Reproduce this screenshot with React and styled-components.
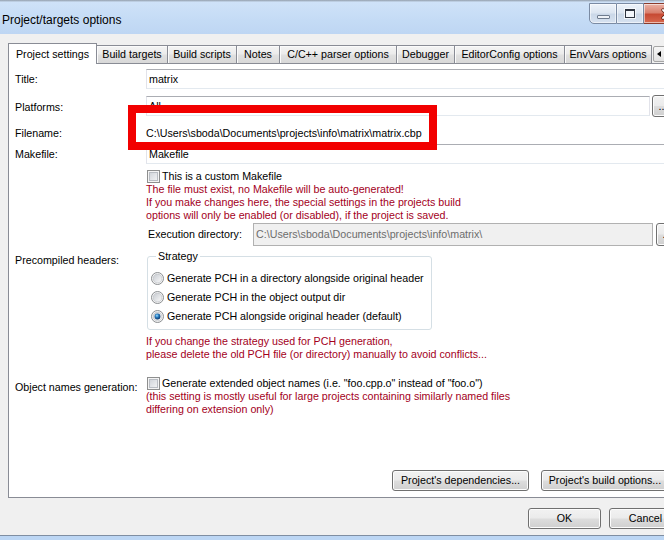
import React from 'react';
import styled, { createGlobalStyle } from 'styled-components';

const Global = createGlobalStyle`
  html, body { margin: 0; padding: 0; background: #ffffff; }
  body {
    font-family: "Liberation Sans", Arial, sans-serif;
    font-size: 10.7px;
    line-height: 13px;
    color: #000;
  }
  #root { width: 670px; height: 540px; overflow: hidden; }
`;

const Viewport = styled.div`
  position: relative;
  width: 664px;
  height: 540px;
  overflow: hidden;
`;

const Window = styled.div`
  width: 720px;
  height: 540px;
  display: flex;
  flex-direction: column;
  background: #f0f0f0;
`;

const TitleBar = styled.div`
  flex: none;
  height: 34px;
  display: flex;
  align-items: flex-start;
  background: linear-gradient(#98a3b0 0, #a9b8c9 1px, #cfe2f8 2px, #c4dbf5 60%, #bed6f3 100%);
`;

const TitleText = styled.div`
  flex: 1;
  padding: 13px 0 0 2px;
  font-size: 12px;
  line-height: 14px;
  color: #000;
`;

const Controls = styled.div`
  display: flex;
  margin: 3px 29px 0 0;
`;

const CaptionButton = styled.div`
  box-sizing: border-box;
  width: ${p => p.$w}px;
  height: 21px;
  display: flex;
  align-items: center;
  justify-content: center;
  border: 1px solid ${p => (p.$close ? '#8a3b2c' : '#7b8ba3')};
  border-left: ${p => (p.$first ? undefined : 'none')};
  border-radius: ${p => (p.$first ? '0 0 0 5px' : p.$close ? '0 0 5px 0' : '0')};
  background: ${p =>
    p.$close
      ? 'linear-gradient(#eab1a4 0%, #d9806e 45%, #c74a34 55%, #d8694f 100%)'
      : 'linear-gradient(#eef3fa 0%, #dde6f1 45%, #cbd8e8 55%, #d7e2f0 100%)'};
  box-shadow: inset 0 0 0 1px rgba(255, 255, 255, 0.55);
`;

const MinGlyph = styled.div`
  width: 11px;
  height: 2px;
  margin-top: 7px;
  border: 1px solid #6f7c8e;
  border-radius: 1px;
  background: #eef2f7;
`;

const MaxGlyph = styled.div`
  box-sizing: border-box;
  width: 10px;
  height: 9px;
  border: 1px solid #2f3540;
  border-top-width: 2px;
  background: #f4f7fb;
  box-shadow: 0 0 0 1px rgba(255, 255, 255, 0.7);
`;

const Body = styled.div`
  flex: 1;
  display: flex;
  flex-direction: column;
  padding-left: 8px;
`;

const TabStrip = styled.div`
  position: relative;
  z-index: 2;
  flex: none;
  height: 29px;
  display: flex;
  align-items: flex-end;
`;

const Tab = styled.div`
  box-sizing: border-box;
  width: ${p => p.$w}px;
  height: ${p => (p.$active ? 21 : 18)}px;
  margin-bottom: ${p => (p.$active ? -1 : 0)}px;
  border-top: 1px solid #898c95;
  border-right: 1px solid #898c95;
  border-left: ${p => (p.$active ? '1px solid #898c95' : 'none')};
  background: ${p =>
    p.$active ? '#ffffff' : 'linear-gradient(#f4f4f4 0%, #ececec 45%, #e0e0e0 55%, #d8d8d8 100%)'};
  box-shadow: ${p => (p.$active ? 'none' : 'inset 1px 1px 0 #fbfbfb')};
  text-align: center;
  padding-top: ${p => (p.$active ? 3 : 0)}px;
  line-height: ${p => (p.$active ? 14 : 17)}px;
  white-space: nowrap;
`;

const Spin = styled.div`
  display: flex;
  margin: 0 0 1px 1px;
`;

const SpinButton = styled.div`
  box-sizing: border-box;
  width: 16px;
  height: 16px;
  display: flex;
  align-items: center;
  padding-left: 3px;
  border: 1px solid #a5a5a5;
  border-radius: 2px;
  background: linear-gradient(#f6f6f6, #e2e2e2);
`;

const LeftTri = styled.div`
  width: 0;
  height: 0;
  border-top: 3.5px solid transparent;
  border-bottom: 3.5px solid transparent;
  border-right: 4px solid #000;
`;

const Panel = styled.div`
  position: relative;
  z-index: 1;
  flex: none;
  box-sizing: border-box;
  height: 435px;
  border: 1px solid #898c95;
  background: #ffffff;
  display: flex;
  flex-direction: column;
  padding: 0 0 6px 6px;
`;

const Row = styled.div`
  display: flex;
  align-items: flex-start;
  margin-top: ${p => p.$mt || 0}px;
`;

const Label = styled.div`
  flex: none;
  width: 131px;
  padding-top: ${p => p.$pt || 0}px;
  line-height: ${p => p.$lh || 13}px;
  white-space: nowrap;
`;

const FieldColumn = styled.div`
  display: flex;
  flex-direction: column;
`;

const FieldLine = styled.div`
  display: flex;
  align-items: center;
  gap: ${p => p.$gap || 0}px;
  margin-top: ${p => p.$mt || 0}px;
`;

const TextBox = styled.div`
  box-sizing: border-box;
  flex: none;
  width: ${p => p.$w}px;
  height: ${p => p.$h}px;
  border: 1px solid;
  border-color: ${p => (p.$disabled ? '#b1b1b1' : '#abadb3 #e2e3ea #e3e9ef #e2e3ea')};
  background: ${p => (p.$disabled ? '#f0f0f0' : '#ffffff')};
  color: ${p => (p.$disabled ? '#6d6d6d' : '#000')};
  padding: 0 2px;
  line-height: ${p => p.$h - 2}px;
  white-space: nowrap;
  overflow: hidden;
`;

const StaticValue = styled.div`
  line-height: 14px;
  white-space: nowrap;
`;

const Button = styled.div`
  box-sizing: border-box;
  flex: none;
  width: ${p => p.$w}px;
  height: ${p => p.$h || 21}px;
  border: 1px solid #707070;
  border-radius: 3px;
  background: linear-gradient(#f2f2f2 0%, #ebebeb 48%, #dddddd 52%, #cfcfcf 100%);
  box-shadow: inset 0 0 0 1px #fcfcfc;
  text-align: center;
  line-height: ${p => (p.$h || 21) - 2}px;
  white-space: nowrap;
`;

const CheckLine = styled.div`
  display: flex;
  align-items: center;
  height: 13px;
  margin-top: ${p => p.$mt || 0}px;
  white-space: nowrap;
`;

const CheckBox = styled.span`
  box-sizing: border-box;
  flex: none;
  width: 13px;
  height: 13px;
  margin: 0 2px 0 1px;
  border: 1px solid #8e8f8f;
  background: linear-gradient(135deg, #c9cdd3 0%, #e4e6e9 55%, #f8f8f8 100%);
  box-shadow: inset 0 0 0 1px #f4f4f4, inset 0 0 0 2px #b9bdc3;
`;

const Note = styled.div`
  color: #a3001c;
  line-height: 13px;
  white-space: nowrap;
  margin-top: ${p => p.$mt || 0}px;
`;

const SubLabel = styled.div`
  flex: none;
  width: 102px;
  margin-left: 2px;
  line-height: 23px;
  white-space: nowrap;
`;

const Group = styled.fieldset`
  margin: 0 0 0 1px;
  padding: 6px 0 3px 3px;
  width: 285px;
  box-sizing: border-box;
  border: 1px solid #d5dfe5;
  border-radius: 3px;
`;

const Legend = styled.legend`
  margin-left: 5px;
  padding: 0 2px;
  line-height: 13px;
`;

const RadioLine = styled.div`
  display: flex;
  align-items: center;
  gap: 3px;
  height: 19px;
  white-space: nowrap;
`;

const ButtonRow = styled.div`
  display: flex;
  gap: 12px;
  margin-top: auto;
  padding-left: 377px;
`;

const Footer = styled.div`
  flex: none;
  box-sizing: border-box;
  height: 37px;
  display: flex;
  gap: 8px;
  padding: 10px 0 0 520px;
`;

const BottomFrame = styled.div`
  flex: none;
  height: 5px;
  box-sizing: border-box;
  border-top: 1px solid #7f8ea2;
  background: #bcd6f4;
`;

const Highlight = styled.div`
  position: absolute;
  z-index: 10;
  left: 128px;
  top: 105px;
  width: 309px;
  height: 45px;
  box-sizing: border-box;
  border: 8px solid #f20000;
  pointer-events: none;
`;

const Radio = ({ checked, id }) => (
  <svg width="13" height="13" viewBox="0 0 13 13" style={{ flex: 'none' }}>
    <defs>
      <linearGradient id={`rg${id}`} x1="0" y1="0" x2="1" y2="1">
        <stop offset="0" stopColor="#c6cad0" />
        <stop offset="1" stopColor="#fbfbfb" />
      </linearGradient>
      <radialGradient id={`rd${id}`} cx="0.4" cy="0.35" r="0.65">
        <stop offset="0" stopColor="#9de3ff" />
        <stop offset="0.45" stopColor="#2a7cc2" />
        <stop offset="1" stopColor="#0d3a6c" />
      </radialGradient>
    </defs>
    <circle cx="6.5" cy="6.5" r="6" fill="#f5f5f5" stroke="#8b8e91" />
    <circle cx="6.5" cy="6.5" r="4.4" fill={`url(#rg${id})`} stroke="#b8bcc1" strokeWidth="0.6" />
    {checked && <circle cx="6.5" cy="6.5" r="2.9" fill={`url(#rd${id})`} />}
  </svg>
);

const CloseGlyph = () => (
  <svg width="14" height="12" viewBox="0 0 14 12">
    <path d="M3 2 L11 10 M11 2 L3 10" stroke="#5a1a10" strokeWidth="3.2" strokeLinecap="round" />
    <path d="M3 2 L11 10 M11 2 L3 10" stroke="#ffffff" strokeWidth="1.8" strokeLinecap="round" />
  </svg>
);

const tabs = [
  { label: 'Project settings', w: 89, active: true },
  { label: 'Build targets', w: 71 },
  { label: 'Build scripts', w: 69 },
  { label: 'Notes', w: 43 },
  { label: 'C/C++ parser options', w: 117 },
  { label: 'Debugger', w: 58 },
  { label: 'EditorConfig options', w: 110 },
  { label: 'EnvVars options', w: 87 },
];

const radios = [
  { label: 'Generate PCH in a directory alongside original header' },
  { label: 'Generate PCH in the object output dir' },
  { label: 'Generate PCH alongside original header (default)', checked: true },
];

export default function App() {
  return (
    <>
      <Global />
      <Viewport>
        <Window>
          <TitleBar>
            <TitleText>Project/targets options</TitleText>
            <Controls>
              <CaptionButton $w={28} $first>
                <MinGlyph />
              </CaptionButton>
              <CaptionButton $w={27}>
                <MaxGlyph />
              </CaptionButton>
              <CaptionButton $w={47} $close>
                <CloseGlyph />
              </CaptionButton>
            </Controls>
          </TitleBar>

          <Body>
            <TabStrip>
              {tabs.map(t => (
                <Tab key={t.label} $w={t.w} $active={t.active}>
                  {t.label}
                </Tab>
              ))}
              <Spin>
                <SpinButton>
                  <LeftTri />
                </SpinButton>
                <SpinButton />
              </Spin>
            </TabStrip>

            <Panel>
              <Row $mt={5}>
                <Label $lh={20}>Title:</Label>
                <TextBox $w={540} $h={20}>matrix</TextBox>
              </Row>

              <Row $mt={6}>
                <Label $pt={6}>Platforms:</Label>
                <FieldLine $gap={2}>
                  <TextBox $w={504} $h={20}>All</TextBox>
                  <Button $w={22} $h={22}>...</Button>
                </FieldLine>
              </Row>

              <Row $mt={9}>
                <Label $lh={14}>Filename:</Label>
                <StaticValue>C:\Users\sboda\Documents\projects\info\matrix\matrix.cbp</StaticValue>
              </Row>

              <Row $mt={4}>
                <Label $lh={20}>Makefile:</Label>
                <FieldColumn>
                  <TextBox $w={540} $h={20}>Makefile</TextBox>
                  <CheckLine $mt={6}>
                    <CheckBox />
                    This is a custom Makefile
                  </CheckLine>
                  <Note>
                    The file must exist, no Makefile will be auto-generated!
                    <br />
                    If you make changes here, the special settings in the projects build
                    <br />
                    options will only be enabled (or disabled), if the project is saved.
                  </Note>
                  <FieldLine $mt={1} $gap={3}>
                    <SubLabel>Execution directory:</SubLabel>
                    <TextBox $w={400} $h={23} $disabled>
                      C:\Users\sboda\Documents\projects\info\matrix\
                    </TextBox>
                    <Button $w={22} $h={23}>...</Button>
                  </FieldLine>
                </FieldColumn>
              </Row>

              <Row $mt={4}>
                <Label $pt={4}>Precompiled headers:</Label>
                <FieldColumn>
                  <Group>
                    <Legend>Strategy</Legend>
                    {radios.map((r, i) => (
                      <RadioLine key={r.label}>
                        <Radio checked={r.checked} id={i} />
                        {r.label}
                      </RadioLine>
                    ))}
                  </Group>
                  <Note $mt={5}>
                    If you change the strategy used for PCH generation,
                    <br />
                    please delete the old PCH file (or directory) manually to avoid conflicts...
                  </Note>
                </FieldColumn>
              </Row>

              <Row $mt={16}>
                <Label $pt={4}>Object names generation:</Label>
                <FieldColumn>
                  <CheckLine>
                    <CheckBox />
                    Generate extended object names (i.e. "foo.cpp.o" instead of "foo.o")
                  </CheckLine>
                  <Note>
                    (this setting is mostly useful for large projects containing similarly named files
                    <br />
                    differing on extension only)
                  </Note>
                </FieldColumn>
              </Row>

              <ButtonRow>
                <Button $w={137}>Project's dependencies...</Button>
                <Button $w={128}>Project's build options...</Button>
              </ButtonRow>
            </Panel>

            <Footer>
              <Button $w={73}>OK</Button>
              <Button $w={73}>Cancel</Button>
            </Footer>
          </Body>

          <BottomFrame />
        </Window>
        <Highlight />
      </Viewport>
    </>
  );
}
